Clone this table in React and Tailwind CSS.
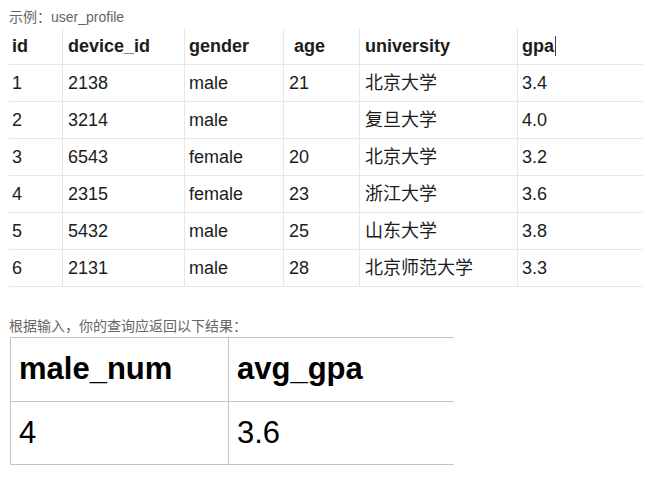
const columns = [
  { key: 'id', label: 'id', pad: 'pl-[3px]' },
  { key: 'device_id', label: 'device_id', pad: 'pl-[5px] border-l' },
  { key: 'gender', label: 'gender', pad: 'pl-[4px] border-l' },
  { key: 'age', label: '\u00a0age', pad: 'pl-[5px] border-l' },
  { key: 'university', label: 'university', pad: 'pl-[5px] border-l' },
  { key: 'gpa', label: 'gpa', pad: 'pl-[4px] border-l' },
];

const rows = [
  { id: 1, device_id: 2138, gender: 'male', age: 21, university: '北京大学', gpa: '3.4' },
  { id: 2, device_id: 3214, gender: 'male', age: '', university: '复旦大学', gpa: '4.0' },
  { id: 3, device_id: 6543, gender: 'female', age: 20, university: '北京大学', gpa: '3.2' },
  { id: 4, device_id: 2315, gender: 'female', age: 23, university: '浙江大学', gpa: '3.6' },
  { id: 5, device_id: 5432, gender: 'male', age: 25, university: '山东大学', gpa: '3.8' },
  { id: 6, device_id: 2131, gender: 'male', age: 28, university: '北京师范大学', gpa: '3.3' },
];

const font = { fontFamily: '"Liberation Sans", "Noto Sans CJK SC", sans-serif' };

export default function App() {
  return (
    <div className="min-h-screen bg-white pl-[9px] pt-[7px] text-[#1c1c1c]" style={font}>
      <div className="h-[21px] text-[14px] leading-[21px] text-[#666]">示例：user_profile</div>

      {/* user_profile table */}
      <div className="grid w-[634px] grid-cols-[53px_122px_99px_76px_158px_126px]">
        {columns.map((c) => (
          <div
            key={c.key}
            className={`flex h-[37px] items-center border-b border-[#e7e7e7] text-[18px] font-bold ${c.pad}`}
          >
            {c.label}
            {c.key === 'gpa' && <span className="ml-px inline-block h-[20px] w-px bg-[#444]" />}
          </div>
        ))}
        {rows.map((r) =>
          columns.map((c) => (
            <div
              key={r.id + c.key}
              className={`flex h-[37px] items-center border-b border-[#e7e7e7] text-[18px] ${c.pad}`}
            >
              {r[c.key]}
            </div>
          ))
        )}
      </div>

      <div className="mt-[28px] h-[22px] text-[14px] leading-[22px] text-[#666]">根据输入，你的查询应返回以下结果：</div>

      {/* result table */}
      <div className="ml-px grid w-[444px] grid-cols-[218px_226px] border-t border-[#c4c4c4] text-[31px] text-black">
        <div className="flex h-[64px] items-center border-b border-l border-[#c4c4c4] pl-[8px] font-bold">male_num</div>
        <div className="flex h-[64px] items-center border-b border-l border-[#c4c4c4] pl-[8px] font-bold">avg_gpa</div>
        <div className="flex h-[63px] items-center border-b border-l border-[#c4c4c4] pl-[8px]">4</div>
        <div className="flex h-[63px] items-center border-b border-l border-[#c4c4c4] pl-[8px]">3.6</div>
      </div>
    </div>
  );
}
